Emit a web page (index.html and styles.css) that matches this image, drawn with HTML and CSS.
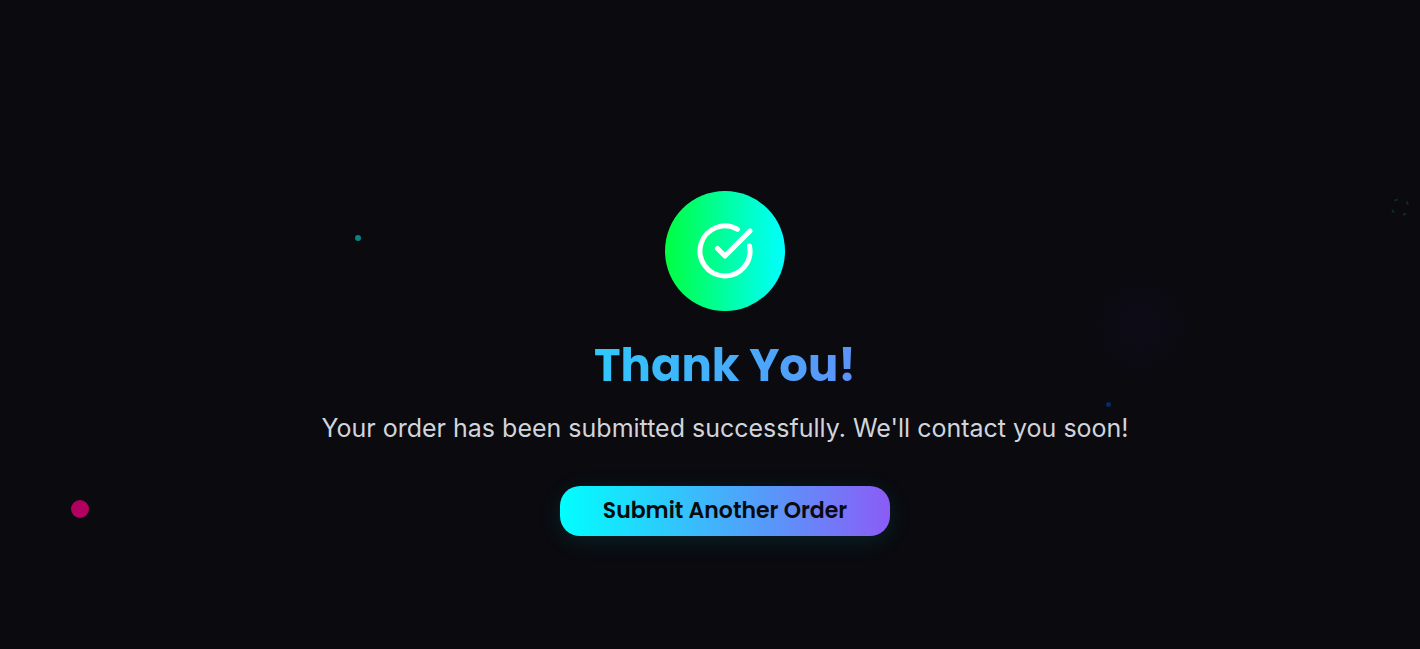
FILE: index.html
```html
<!DOCTYPE html>
<html lang="en">
<head>
<meta charset="utf-8">
<meta name="viewport" content="width=device-width, initial-scale=1">
<title>Thank You!</title>
<link rel="stylesheet" href="styles.css">
</head>
<body>
<div class="particles" aria-hidden="true">
  <span class="glow"></span>
  <span class="dot dot-teal"></span>
  <span class="dot dot-blue"></span>
  <span class="dot dot-pink"></span>
  <svg class="ring" viewBox="0 0 24 24" fill="#0c2a30">
    <ellipse cx="8" cy="6" rx="2" ry="1.2" transform="rotate(-25 8 6)"/>
    <ellipse cx="19.3" cy="9" rx="2" ry="1.2" transform="rotate(65 19.3 9)"/>
    <ellipse cx="5" cy="17.3" rx="2" ry="1.2" transform="rotate(55 5 17.3)"/>
    <ellipse cx="16.5" cy="20.2" rx="2" ry="1.2" transform="rotate(-15 16.5 20.2)"/>
  </svg>
</div>
<main class="page">
  <section class="success">
    <div class="badge">
      <svg class="check" viewBox="0 0 24 24" fill="none" stroke="currentColor" stroke-width="2" stroke-linecap="round" stroke-linejoin="round" aria-hidden="true">
        <path d="M21.801 10A10 10 0 1 1 17 3.335"/>
        <path d="m9 11 3 3L22 4"/>
      </svg>
    </div>
    <h1 class="title">Thank You!</h1>
    <p class="message">Your order has been submitted successfully. We'll contact you soon!</p>
    <button class="again" type="button">Submit Another Order</button>
  </section>
</main>
</body>
</html>
```

FILE: styles.css
```css
* { box-sizing: border-box; }
body {
  margin: 0;
  min-height: 100vh;
  background: #0a0a0f;
  color: #d1d5db;
  font-family: Inter, "Liberation Sans", sans-serif;
  overflow-x: hidden;
}
.page {
  display: flex;
  justify-content: center;
  padding: 191px 0 64px 30px;
}
.success {
  position: relative;
  display: flex;
  flex-direction: column;
  align-items: center;
  text-align: center;
}
.badge {
  display: grid;
  place-items: center;
  width: 120px;
  height: 120px;
  border-radius: 50%;
  color: #fff;
  background: linear-gradient(90deg, #00ff41, #00ffff);
}
.check { width: 60px; height: 60px; }
.title {
  align-self: stretch;
  margin: 25px 0 15px;
  font: 700 45px/60px Poppins, Inter, sans-serif;
  color: transparent;
  background: linear-gradient(90deg, #00ffff, #8b5cf6);
  background-clip: text;
  -webkit-background-clip: text;
}
.message {
  margin: 0 0 40px;
  font-size: 25px;
  line-height: 35px;
}
.again {
  height: 50px;
  padding: 0 43px;
  border: 0;
  border-radius: 20px;
  font: 600 22px/34px Poppins, Inter, sans-serif;
  color: #0a0a0f;
  background: linear-gradient(90deg, #00ffff, #8b5cf6);
  box-shadow: 0 5px 25px rgba(0, 255, 255, 0.1);
  cursor: pointer;
}
.particles {
  position: absolute;
  inset: 0;
  overflow: hidden;
  pointer-events: none;
}
.dot, .glow, .ring { position: absolute; }
.dot, .glow { border-radius: 50%; }
.dot-teal { left: 355px; top: 235px; width: 6px; height: 6px; background: #078384; }
.dot-blue { left: 1106px; top: 402px; width: 5px; height: 5px; background: #062b63; }
.dot-pink { left: 71px; top: 500px; width: 18px; height: 18px; background: #b10060; }
.glow {
  left: 1086px;
  top: 272px;
  width: 108px;
  height: 108px;
  background: radial-gradient(circle closest-side, #0d0b18, #0c0b13 50%, #0b0a10 95%, #0a0a0f);
}
.ring { left: 1388px; top: 194px; width: 24px; height: 24px; }
```
